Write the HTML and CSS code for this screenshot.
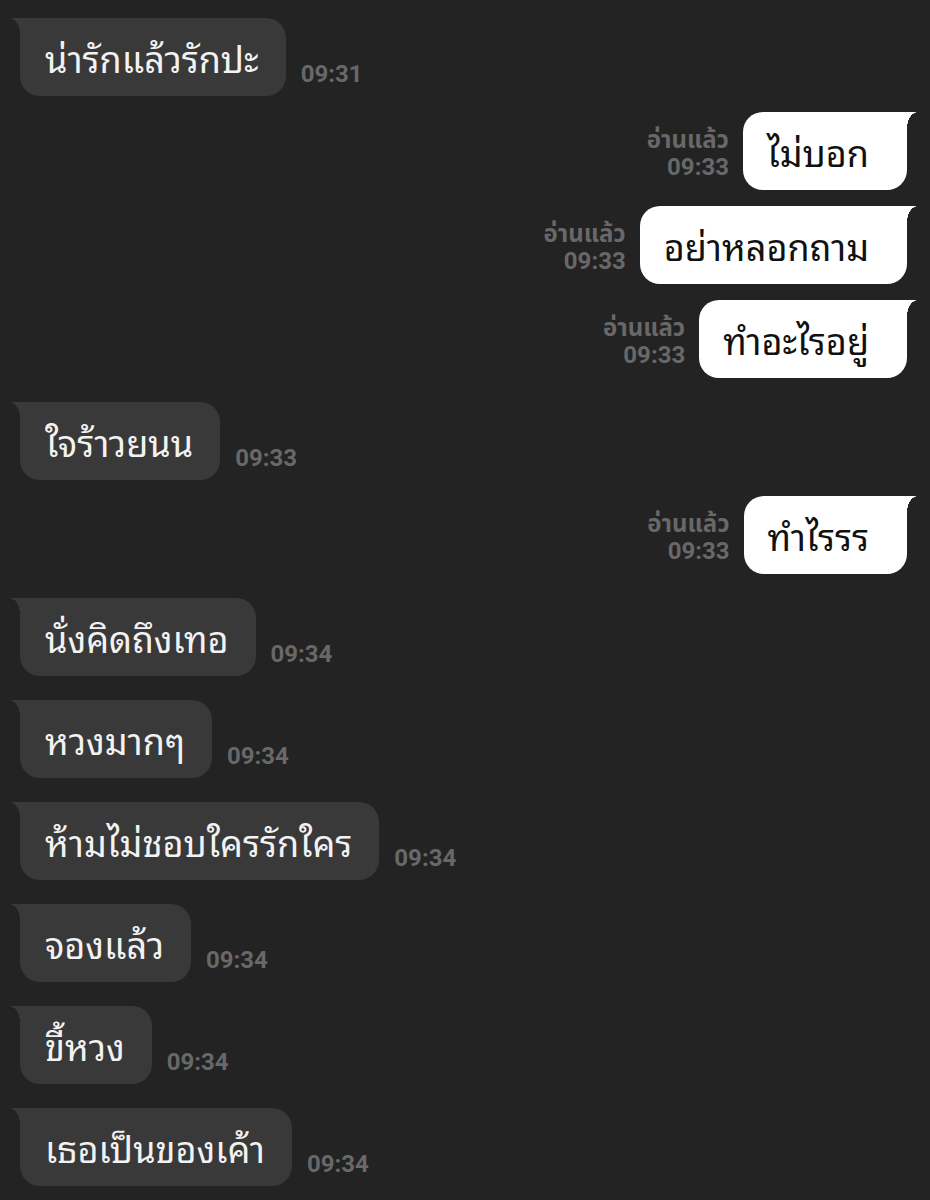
FILE: index.html
```html
<!DOCTYPE html>
<html lang="th">
<head>
<meta charset="utf-8">
<link rel="stylesheet" href="styles.css">
</head>
<body>
<div class="chat">
  <div class="row in"><div class="bubble">น่ารักแล้วรักปะ</div><div class="meta">09:31</div></div>
  <div class="row out"><div class="meta"><span>อ่านแล้ว</span><span>09:33</span></div><div class="bubble">ไม่บอก</div></div>
  <div class="row out"><div class="meta"><span>อ่านแล้ว</span><span>09:33</span></div><div class="bubble">อย่าหลอกถาม</div></div>
  <div class="row out"><div class="meta"><span>อ่านแล้ว</span><span>09:33</span></div><div class="bubble">ทำอะไรอยู่</div></div>
  <div class="row in"><div class="bubble">ใจร้าวยนน</div><div class="meta">09:33</div></div>
  <div class="row out"><div class="meta"><span>อ่านแล้ว</span><span>09:33</span></div><div class="bubble">ทำไรรร</div></div>
  <div class="row in"><div class="bubble">นั่งคิดถึงเทอ</div><div class="meta">09:34</div></div>
  <div class="row in"><div class="bubble">หวงมากๆ</div><div class="meta">09:34</div></div>
  <div class="row in"><div class="bubble">ห้ามไม่ชอบใครรักใคร</div><div class="meta">09:34</div></div>
  <div class="row in"><div class="bubble">จองแล้ว</div><div class="meta">09:34</div></div>
  <div class="row in"><div class="bubble">ขี้หวง</div><div class="meta">09:34</div></div>
  <div class="row in"><div class="bubble">เธอเป็นของเค้า</div><div class="meta">09:34</div></div>
</div>
</body>
</html>
```
FILE: styles.css
```css
html, body {
  margin: 0;
  padding: 0;
  background: #232323;
}
body {
  font-family: "Noto Sans Thai Looped", "Noto Looped Thai", "Loma", "Garuda", "Tlwg Typo", "Noto Sans Thai", "Noto Sans", sans-serif;
}
.chat {
  width: 930px;
  padding: 10px 0 0;
  display: flex;
  flex-direction: column;
  gap: 16px;
}
.row {
  display: flex;
  align-items: flex-end;
}
.row.in {
  padding-left: 20px;
  margin-top: 8px;
}
.row.out {
  justify-content: flex-end;
  padding-right: 23px;
}
.bubble {
  position: relative;
  height: 78px;
  box-sizing: border-box;
  display: flex;
  align-items: center;
  font-size: 36px;
  white-space: nowrap;
  border-radius: 20px;
}
.in .bubble {
  padding: 0 27px 0 25px;
  background: #393939;
  color: #f2f2f2;
  border-top-left-radius: 0;
}
.out .bubble {
  padding: 0 38px 0 24px;
  background: #ffffff;
  color: #111111;
  border-top-right-radius: 0;
}
.in .bubble::before,
.out .bubble::before {
  content: "";
  position: absolute;
  top: 0;
  width: 11px;
  height: 16px;
}
.in .bubble::before {
  left: -11px;
  background: radial-gradient(ellipse 11px 16px at 0 100%, transparent 98%, #393939 100%);
}
.out .bubble::before {
  right: -11px;
  background: radial-gradient(ellipse 11px 16px at 100% 100%, transparent 98%, #ffffff 100%);
}
.meta {
  font-family: Roboto, "Noto Sans Thai", "Loma", sans-serif;
  font-weight: bold;
  font-size: 24px;
  color: #686868;
  line-height: 27px;
  display: flex;
  flex-direction: column;
  align-items: flex-end;
}
.in .meta {
  margin: 0 0 8px 15px;
}
.out .meta {
  margin: 0 14px 9px 0;
}
```
